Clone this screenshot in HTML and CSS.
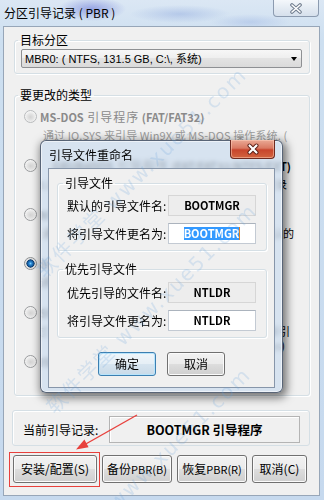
FILE: index.html
```html
<!DOCTYPE html>
<html>
<head>
<meta charset="utf-8">
<title>分区引导记录 ( PBR )</title>
<link rel="stylesheet" href="styles.css">
</head>
<body>
<div class="window">
  <div class="titlebar">
    <span class="title">分区引导记录 ( PBR )</span>
    <span class="sys-close">
      <svg width="14" height="11" viewBox="0 0 14 11"><path class="x-out" d="M3 2 L11 9 M11 2 L3 9"/><path class="x-in" d="M3 2 L11 9 M11 2 L3 9"/></svg>
    </span>
  </div>

  <div class="client">
    <fieldset class="group target">
      <legend>目标分区</legend>
      <div class="combo">
        <span class="combo-text">MBR0: ( NTFS, 131.5 GB, C:\, 系统)</span>
        <span class="combo-arrow"></span>
      </div>
    </fieldset>

    <fieldset class="group types">
      <legend>要更改的类型</legend>
      <div class="option disabled">
        <span class="radio"></span>
        <div class="opt-text">
          <div class="opt-name"><span>MS-DOS <span class="cjk">引导程序</span> (FAT/FAT32)</span></div>
          <div class="opt-desc">通过 IO.SYS 来引导 Win9X 或 MS-DOS 操作系统. (</div>
        </div>
      </div>
      <div class="option">
        <span class="radio"></span>
        <div class="opt-text">
          <div class="opt-name tail t6"><span>GRUB4DOS <span class="cjk">引导程序</span> (FAT/FAT32/NTFS/EXT)</span></div>
          <div class="opt-desc tail t10"><span>通过 GRLDR 来引导 GRUB4DOS 菜单, 用于多系统启动记录</span></div>
        </div>
      </div>
      <div class="option">
        <span class="radio"></span>
        <div class="opt-text">
          <div class="opt-name"><span>NTLDR <span class="cjk">引导程序</span> (FAT/NTFS)</span></div>
          <div class="opt-desc tail t3"><span>通过 NTLDR 来引导 Windows 2000/XP 系统, 默认的</span></div>
        </div>
      </div>
      <div class="option checked">
        <span class="radio"></span>
        <div class="opt-text">
          <div class="opt-name"><span>BOOTMGR <span class="cjk">引导程序</span> (FAT/NTFS)</span></div>
          <div class="opt-desc">通过 BOOTMGR 来引导 Windows Vista/7 系统</div>
        </div>
      </div>
      <div class="option">
        <span class="radio"></span>
        <div class="opt-text">
          <div class="opt-name"><span>SYSLINUX <span class="cjk">引导程序</span> (FAT)</span></div>
          <div class="opt-desc tail t7"><span>通过 LDLINUX.SYS 来引导 SYSLINUX 菜单, 可以用来引</span></div>
          <div class="opt-desc2 tail t12"><span>导 Linux 系统 (ldlinux.sys)</span></div>
        </div>
      </div>
      <div class="option">
        <span class="radio"></span>
        <div class="opt-text">
          <div class="opt-name"><span>ISOLINUX <span class="cjk">引导程序</span> (CDFS)</span></div>
        </div>
      </div>
    </fieldset>

    <div class="current">
      <span class="current-label">当前引导记录:</span>
      <div class="current-field">BOOTMGR 引导程序</div>
    </div>

    <div class="buttons">
      <button class="btn b-install">安装/配置(S)</button>
      <button class="btn b-backup">备份<span class="lat">PBR(B)</span></button>
      <button class="btn b-restore">恢复<span class="lat">PBR(R)</span></button>
      <button class="btn b-cancel">取消(C)</button>
    </div>
  </div>

  <!-- modal rename dialog -->
  <div class="dialog">
    <div class="dlg-titlebar">
      <span class="dlg-title">引导文件重命名</span>
      <span class="dlg-close">
        <svg width="14" height="12" viewBox="0 0 14 12"><path class="x-out" d="M3.5 2.5 L10.5 9.5 M10.5 2.5 L3.5 9.5"/><path class="x-in" d="M3.5 2.5 L10.5 9.5 M10.5 2.5 L3.5 9.5"/></svg>
      </span>
    </div>
    <div class="dlg-client">
      <fieldset class="group dlg-group">
        <legend>引导文件</legend>
        <div class="row">
          <span class="row-label">默认的引导文件名:</span>
          <span class="field ro">BOOTMGR</span>
        </div>
        <div class="row">
          <span class="row-label">将引导文件更名为:</span>
          <span class="field"><span class="sel">BOOTMGR</span></span>
        </div>
      </fieldset>
      <fieldset class="group dlg-group second">
        <legend>优先引导文件</legend>
        <div class="row">
          <span class="row-label">优先引导的文件名:</span>
          <span class="field ro">NTLDR</span>
        </div>
        <div class="row">
          <span class="row-label">将引导文件更名为:</span>
          <span class="field">NTLDR</span>
        </div>
      </fieldset>
      <div class="dlg-buttons">
        <button class="btn dlg-btn default">确定</button>
        <button class="btn dlg-btn">取消</button>
      </div>
    </div>
  </div>

  <!-- annotation -->
  <div class="mark-box"></div>
  <svg class="mark-arrow" width="324" height="500" viewBox="0 0 324 500">
    <line x1="137" y1="415" x2="84" y2="445" />
    <polygon points="76,449.5 84.4,439.4 88.6,447.2" />
  </svg>

  <div class="wm wm1">软件学堂 www.xue51.com</div>
  <div class="wm wm2">软件学堂 www.xue51.com</div>
  <div class="wm wm3">软件学堂 www.xue51.com</div>
</div>
</body>
</html>
```

FILE: styles.css
```css
html, body { margin:0; padding:0; }
body {
  width:324px;
  height:500px;
  overflow:hidden;
  font:12px/14px "Noto Sans CJK SC", sans-serif;
  color:#000;
}

.window {
  position:relative;
  width:324px;
  height:500px;
  overflow:hidden;
  background:
    radial-gradient(ellipse 34px 12px at 92px 9px, rgba(96,110,214,.55), rgba(96,110,214,0)),
    radial-gradient(ellipse 50px 9px at 180px 14px, rgba(120,150,215,.35), rgba(120,150,215,0)),
    radial-gradient(ellipse 40px 8px at 250px 22px, rgba(150,175,225,.4), rgba(150,175,225,0)),
    linear-gradient(#dbe7f4, #cddff0 40px, #c6d9ee);
}

/* ---- main window chrome ---- */
.titlebar {
  height:26px;
  display:flex;
  align-items:flex-start;
  justify-content:space-between;
  padding-left:4px;
}
.title { line-height:26px; }
.sys-close {
  width:46px;
  height:17px;
  margin-right:5px;
  box-sizing:border-box;
  border:1px solid #8c9bb0;
  border-top:none;
  border-radius:0 0 4px 4px;
  background:linear-gradient(#f4f7fb, #e4ebf3 50%, #d6e0ec);
  display:flex;
  align-items:center;
  justify-content:center;
}
.sys-close .x-out { stroke:#6f7c8e; stroke-width:3.6; stroke-linecap:round; fill:none; }
.sys-close .x-in { stroke:#ffffff; stroke-width:1.6; stroke-linecap:round; fill:none; }

.client {
  margin-left:3px;
  width:317px;
  height:470px;
  box-sizing:border-box;
  border:1px solid #97a6b8;
  background:#f0f0f0;
}

/* ---- group boxes ---- */
.group {
  margin:0 0 0 10px;
  width:296px;
  box-sizing:border-box;
  border:1px solid #d5dfe5;
  border-radius:3px;
  box-shadow:inset 1px 1px 0 #fff, 1px 1px 0 #fff;
  min-inline-size:0;
}
.group > legend { padding:0 2px; line-height:14px; }

.target { margin-top:6px; padding:2px 7px 5px 6px; }
.target > legend { margin-left:-3px; }

.combo {
  height:19px;
  box-sizing:border-box;
  border:1px solid #8e9093;
  border-radius:2px;
  background:linear-gradient(#f7f7f7, #eeeeee 50%, #e3e3e3 50%, #dadada);
  display:flex;
  align-items:center;
  padding-left:3px;
}
.combo-text {
  font:11px/14px "Liberation Sans", "Noto Sans CJK SC", sans-serif;
  white-space:nowrap;
}
.combo-arrow {
  margin-left:auto;
  margin-right:4px;
  width:0;
  height:0;
  border-left:3.5px solid transparent;
  border-right:3.5px solid transparent;
  border-top:4px solid #000;
}

.types {
  margin-top:14px;
  height:308px;
  padding:6px 12px 0 9px;
  overflow:hidden;
}
.types > legend { margin-left:-6px; }

.option { display:flex; height:49px; }
.radio {
  flex:none;
  width:13px;
  height:13px;
  margin-top:2px;
  box-sizing:border-box;
  border:1px solid #9a9c9e;
  border-radius:50%;
  background:radial-gradient(circle at 50% 55%, #d2d2d2 0, #e4e4e4 40%, #fbfbfb 80%);
}
.option.disabled .radio { border-color:#b9bbbd; }
.option.checked .radio {
  border-color:#8e9092;
  background:radial-gradient(circle at 50% 50%, #7fd0ff 0, #2a8ad6 18%, #114f8e 42%, #0d3763 50%, #dadada 55%, #f6f6f6 85%);
}
.opt-text {
  flex:1;
  min-width:0;
  margin-left:3px;
  white-space:nowrap;
  overflow:hidden;
}
.opt-name { line-height:17px; font-size:11px; font-weight:bold; }
.opt-name .cjk { font-size:12px; font-weight:normal; letter-spacing:1px; margin-left:1px; }
.opt-desc { padding-top:2px; line-height:14px; font-size:11px; }
.opt-desc2 { line-height:14px; font-size:11px; }
.tail { display:flex; justify-content:flex-end; }
.tail > span { flex:none; }
.t3 { padding-right:3px; }
.t6 { padding-right:6px; }
.t7 { padding-right:7px; }
.t10 { padding-right:10px; }
.t12 { padding-right:12px; }
.option.disabled { color:#8a8a8a; }
.option.disabled .opt-desc { color:#9c9c9c; padding-left:3px; letter-spacing:0.1px; }

/* ---- current record ---- */
.current {
  margin:14px 0 0 8px;
  width:298px;
  height:36px;
  box-sizing:border-box;
  border:1px solid #d5dfe5;
  border-radius:3px;
  box-shadow:inset 1px 1px 0 #fff;
  display:flex;
  align-items:center;
  padding:5px 9px 2px 10px;
}
.current-label { width:86px; flex:none; }
.current-field {
  flex:1;
  height:27px;
  box-sizing:border-box;
  border:1px solid #b4b4b4;
  box-shadow:inset 1px 1px 0 #fff;
  background:#f0f0f0;
  text-align:center;
  line-height:25px;
  font-size:12.5px;
  font-weight:bold;
}

/* ---- buttons ---- */
.buttons { display:flex; gap:5px; margin:9px 0 0 9px; }
.btn {
  height:28px;
  box-sizing:border-box;
  border:1px solid #707070;
  border-radius:3px;
  background:linear-gradient(#f2f2f2, #ebebeb 48%, #dddddd 52%, #cfcfcf);
  box-shadow:inset 0 0 0 1px #fbfbfb;
  font:12px/14px "Noto Sans CJK SC", sans-serif;
  color:#000;
  padding:0;
}
.btn .lat { font-size:11px; }
.b-install { width:84px; }
.b-backup { width:70px; }
.b-restore { width:70px; }
.b-cancel { width:55px; }

/* ---- rename dialog ---- */
.dialog {
  position:absolute;
  left:40px;
  top:140px;
  width:243px;
  height:253px;
  box-sizing:border-box;
  border:1px solid rgba(45,58,78,.75);
  border-radius:6px;
  padding:0 7px 4px 7px;
  background:rgba(208,223,239,.78);
  backdrop-filter:blur(2px);
  box-shadow:inset 0 0 0 1px rgba(255,255,255,.55), 2px 3px 9px 2px rgba(0,0,0,.5);
}
.dlg-titlebar {
  height:27px;
  display:flex;
  align-items:flex-start;
  justify-content:space-between;
}
.dlg-title { line-height:27px; padding-left:1px; }
.dlg-close {
  width:45px;
  height:19px;
  margin-top:-1px;
  box-sizing:border-box;
  border:1px solid #6e2a20;
  border-top:none;
  border-radius:0 0 4px 4px;
  background:linear-gradient(#eaa995, #d97a63 45%, #c8452c 55%, #d2643f);
  box-shadow:inset 0 0 0 1px rgba(255,210,190,.5);
  display:flex;
  align-items:center;
  justify-content:center;
}
.dlg-close .x-out { stroke:#5a1f16; stroke-width:4; stroke-linecap:round; fill:none; }
.dlg-close .x-in { stroke:#ffffff; stroke-width:2.2; stroke-linecap:round; fill:none; }

.dlg-client {
  height:220px;
  box-sizing:border-box;
  border:1px solid #8796aa;
  background:#f0f0f0;
  overflow:hidden;
}
.dlg-group {
  margin:7px 0 0 8px;
  width:210px;
  padding:5px 10px 6px 9px;
}
.dlg-group > legend { margin-left:-4px; }
.dlg-group.second { margin-top:11px; padding-top:6px; }

.row { display:flex; align-items:center; height:21px; }
.row + .row { margin-top:7px; }
.row-label { width:101px; flex:none; white-space:nowrap; }
.field {
  width:88px;
  height:21px;
  box-sizing:border-box;
  border:1px solid #c3cad3;
  border-top-color:#abb3bd;
  background:#fff;
  text-align:center;
  line-height:19px;
  font-size:11px;
  font-weight:bold;
}
.field.ro { background:#ededed; border-color:#d6d6d6; }
.sel {
  display:inline-block;
  background:#3399ff;
  color:#fff;
  line-height:13px;
  border-right:1px solid #d9822b;
}

.dlg-buttons {
  display:flex;
  justify-content:center;
  gap:11px;
  margin-top:14px;
}
.dlg-btn { width:58px; height:24px; }
.dlg-btn.default {
  border-color:#3c7fb1;
  box-shadow:inset 0 0 0 1px #b9e4fb;
  background:linear-gradient(#f0f6fa, #e6eff6 48%, #d6e4ef 52%, #c9dae8);
}

/* ---- annotation ---- */
.mark-box {
  position:absolute;
  left:9px;
  top:452px;
  width:91px;
  height:35px;
  box-sizing:border-box;
  border:1px solid #e8403c;
  pointer-events:none;
}
.mark-arrow { position:absolute; left:0; top:0; pointer-events:none; }
.mark-arrow line { stroke:#e8403c; stroke-width:1.4; }
.mark-arrow polygon { fill:#e8403c; }

/* ---- watermark ---- */
.wm {
  position:absolute;
  font:20px/24px "DejaVu Sans", "Noto Sans CJK SC", sans-serif;
  letter-spacing:2px;
  color:rgba(100,160,220,.2);
  white-space:nowrap;
  transform-origin:0 50%;
  transform:rotate(-45deg);
  pointer-events:none;
}
.wm1 { left:40px; top:262px; }
.wm2 { left:44px; top:562px; }
.wm3 { left:50px; top:398px; }
```
